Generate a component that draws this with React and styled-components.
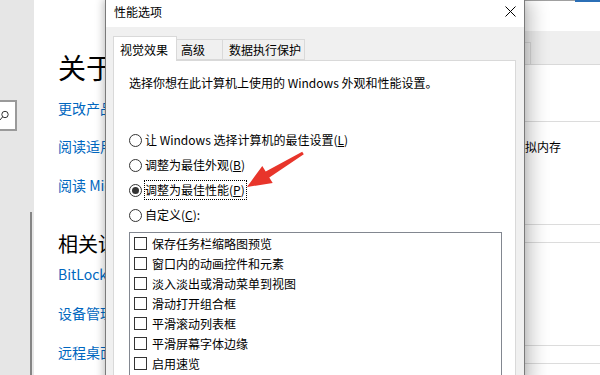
import React from 'react';
import styled, { createGlobalStyle } from 'styled-components';

const Global = createGlobalStyle`
  html, body { margin: 0; padding: 0; background: #fff; }
  body { font-family: "Noto Sans CJK SC", "Noto Sans", sans-serif; }
  * { box-sizing: border-box; }
`;

const Desktop = styled.div`
  position: relative;
  width: 600px;
  height: 375px;
  overflow: hidden;
  background: #fff;
`;

/* ---------- Settings window (background) ---------- */
const SettingsWindow = styled.div`
  display: flex;
  height: 100%;
`;

const NavPane = styled.div`
  width: 34px;
  flex: none;
  background: #e6e6e6;
  display: flex;
  flex-direction: column;
`;

const SearchBox = styled.div`
  margin-top: 100px;
  margin-left: -20px;
  width: 37px;
  height: 31px;
  border: 2px solid #9a9a9a;
  background: #fff;
  display: flex;
  align-items: center;
  justify-content: flex-end;
  padding-right: 6px;
`;

const ScrollThumb = styled.div`
  margin-top: 81px;
  margin-left: 30px;
  width: 2px;
  flex: 1;
  background: #858585;
`;

const Content = styled.div`
  flex: 1;
  background: #fff;
  padding: 49px 0 0 24px;
  white-space: nowrap;
  overflow: hidden;
`;

const PageTitle = styled.h1`
  margin: 0;
  font-size: 28px;
  line-height: 36px;
  font-weight: 400;
  color: #000;
`;

const SectionTitle = styled.h2`
  margin: 35px 0 0;
  font-size: 20px;
  line-height: 28px;
  font-weight: 400;
  color: #000;
`;

const NavLink = styled.a`
  display: block;
  margin-top: ${p => p.$gap}px;
  font-size: 14px;
  line-height: 20px;
  color: #0067c0;
  text-decoration: none;
`;

/* ---------- Window behind on the right ---------- */
const BackWindow = styled.div`
  position: absolute;
  left: 490px;
  top: 0;
  width: 160px;
  height: 375px;
  background: #fff;
  border-top: 1px solid #a0a0a0;
  display: flex;
  flex-direction: column;
`;

const BackTitle = styled.div`
  height: 30px;
  flex: none;
  display: flex;
  justify-content: flex-end;
  align-items: flex-start;
`;

const AccentStrip = styled.div`
  width: 75px;
  height: 2px;
  margin-top: -1px;
  background: #2b6fb6;
`;

const BackTabs = styled.div`
  height: 33px;
  flex: none;
  background: #efefef;
  display: flex;
  align-items: flex-end;
  padding-left: 6px;
`;

const BackTab = styled.div`
  width: 35px;
  height: 22px;
  border: 1px solid #d9d9d9;
  border-bottom: none;
  background: #f0f0f0;
`;

const BackPanel = styled.div`
  flex: 1;
  border-top: 1px solid #d9d9d9;
  padding: 56px 0 0 6px;
  display: flex;
  flex-direction: column;
  gap: 17px;
`;

const GroupBox = styled.div`
  height: 104px;
  flex: none;
  border: 1px solid #dcdcdc;
  padding: 17px 0 0 16px;
  font-size: 12px;
  line-height: 16px;
  color: #000;
  white-space: nowrap;
`;

/* ---------- Performance options dialog ---------- */
const Dialog = styled.div`
  position: absolute;
  left: 105px;
  top: -1px;
  width: 420px;
  height: 390px;
  border: 1px solid #7a7a7a;
  background: #f0f0f0;
  display: flex;
  flex-direction: column;
  box-shadow: -2px 0 8px rgba(0, 0, 0, 0.22), 10px 0 16px -2px rgba(0, 0, 0, 0.2);
  font-size: 12px;
  color: #000;
`;

const TitleBar = styled.div`
  height: 27px;
  flex: none;
  background: #fff;
  display: flex;
  align-items: flex-start;
  justify-content: space-between;
  padding-left: 8px;
`;

const Title = styled.div`
  line-height: 24px;
`;

const CloseButton = styled.div`
  width: 27px;
  height: 22px;
  display: flex;
  align-items: center;
  justify-content: center;
`;

const DialogBody = styled.div`
  flex: 1;
  display: flex;
  flex-direction: column;
  padding: 9px 8px 0 7px;
`;

const TabRow = styled.div`
  display: flex;
  align-items: flex-end;
  height: 24px;
  position: relative;
  z-index: 1;
`;

const Tab = styled.div`
  width: ${p => p.$w}px;
  height: ${p => (p.$active ? 25 : 21)}px;
  margin-bottom: ${p => (p.$active ? -1 : 0)}px;
  padding-left: ${p => p.$pl}px;
  border: 1px solid #d9d9d9;
  border-bottom: ${p => (p.$active ? 'none' : '1px solid #d9d9d9')};
  background: ${p => (p.$active ? '#fff' : '#f0f0f0')};
  display: flex;
  align-items: center;
  white-space: nowrap;
  & + & { margin-left: -1px; }
`;

const TabPanel = styled.div`
  flex: 1;
  background: #fff;
  border: 1px solid #d9d9d9;
  padding: 14px 0 0 15px;
`;

const Intro = styled.p`
  margin: 0;
  line-height: 16px;
  white-space: nowrap;
`;

const RadioList = styled.div`
  margin-top: 39px;
  display: flex;
  flex-direction: column;
  gap: 5px;
`;

const RadioRow = styled.div`
  height: 20px;
  display: flex;
  align-items: center;
  gap: 2px;
`;

const RadioCircle = styled.span`
  width: 13px;
  height: 13px;
  flex: none;
  border-radius: 50%;
  border: 1px solid #333;
  background: #fff;
  display: flex;
  align-items: center;
  justify-content: center;
  &::after {
    content: '';
    width: 7px;
    height: 7px;
    border-radius: 50%;
    background: ${p => (p.$checked ? '#333' : 'transparent')};
  }
`;

const OptionLabel = styled.span`
  height: 20px;
  line-height: 18px;
  border: 1px dotted ${p => (p.$focused ? '#000' : 'transparent')};
  padding-right: 1px;
  white-space: nowrap;
`;

const AccessKey = styled.span`
  text-decoration: underline;
  text-underline-offset: 1px;
`;

const ListBox = styled.div`
  margin-top: 7px;
  width: 373px;
  height: 160px;
  border: 1px solid #828790;
  padding: 0 0 0 4px;
`;

const CheckRow = styled.div`
  height: 20px;
  display: flex;
  align-items: center;
  gap: 5px;
  white-space: nowrap;
`;

const CheckBox = styled.span`
  width: 13px;
  height: 13px;
  flex: none;
  border: 1px solid #333;
  background: #fff;
`;

const ArrowSvg = styled.svg`
  position: absolute;
  left: 240px;
  top: 145px;
  overflow: visible;
`;

const radios = [
  { text: '让 Windows 选择计算机的最佳设置', key: 'L' },
  { text: '调整为最佳外观', key: 'B' },
  { text: '调整为最佳性能', key: 'P', checked: true },
  { text: '自定义', key: 'C', colon: true },
];

const checks = [
  '保存任务栏缩略图预览',
  '窗口内的动画控件和元素',
  '淡入淡出或滑动菜单到视图',
  '滑动打开组合框',
  '平滑滚动列表框',
  '平滑屏幕字体边缘',
  '启用速览',
];

export default function App() {
  return (
    <>
      <Global />
      <Desktop>
        <SettingsWindow>
          <NavPane>
            <SearchBox>
              <svg width="10" height="12" viewBox="0 0 10 12">
                <circle cx="6" cy="4.5" r="3.2" fill="none" stroke="#333" strokeWidth="1" />
                <line x1="3.7" y1="6.8" x2="0.5" y2="10.5" stroke="#333" strokeWidth="1" />
              </svg>
            </SearchBox>
            <ScrollThumb />
          </NavPane>
          <Content>
            <PageTitle>关于</PageTitle>
            <NavLink $gap={13}>更改产品密钥或升级 Windows</NavLink>
            <NavLink $gap={18}>阅读适用于我们服务的 Microsoft 服务协议</NavLink>
            <NavLink $gap={19}>阅读 Microsoft 软件许可条款</NavLink>
            <SectionTitle>相关设置</SectionTitle>
            <NavLink $gap={6}>BitLocker 设置</NavLink>
            <NavLink $gap={19}>设备管理器</NavLink>
            <NavLink $gap={19}>远程桌面</NavLink>
          </Content>
        </SettingsWindow>

        <BackWindow>
          <BackTitle>
            <AccentStrip />
          </BackTitle>
          <BackTabs>
            <BackTab />
          </BackTabs>
          <BackPanel>
            <GroupBox>虚拟内存</GroupBox>
            <GroupBox />
            <GroupBox />
          </BackPanel>
        </BackWindow>

        <Dialog>
          <TitleBar>
            <Title>性能选项</Title>
            <CloseButton>
              <svg width="11" height="11" viewBox="0 0 11 11">
                <path d="M0.5 0.5 L10.5 10.5 M10.5 0.5 L0.5 10.5" stroke="#000" strokeWidth="1" />
              </svg>
            </CloseButton>
          </TitleBar>
          <DialogBody>
            <TabRow>
              <Tab $active $w={64} $pl={6}>视觉效果</Tab>
              <Tab $w={47} $pl={4}>高级</Tab>
              <Tab $w={83} $pl={6}>数据执行保护</Tab>
            </TabRow>
            <TabPanel>
              <Intro>选择你想在此计算机上使用的 Windows 外观和性能设置。</Intro>
              <RadioList>
                {radios.map(r => (
                  <RadioRow key={r.key}>
                    <RadioCircle $checked={r.checked} />
                    <OptionLabel $focused={r.checked}>
                      {r.text}(<AccessKey>{r.key}</AccessKey>){r.colon ? ':' : ''}
                    </OptionLabel>
                  </RadioRow>
                ))}
              </RadioList>
              <ListBox>
                {checks.map(c => (
                  <CheckRow key={c}>
                    <CheckBox />
                    {c}
                  </CheckRow>
                ))}
              </ListBox>
            </TabPanel>
          </DialogBody>
        </Dialog>

        <ArrowSvg width="70" height="50" viewBox="0 0 70 50">
          <polygon
            points="7,42 22.3,20.9 25.7,26.5 62.2,6.7 63.8,9.3 29.3,32.5 32.7,38"
            fill="#e8352b"
          />
        </ArrowSvg>
      </Desktop>
    </>
  );
}
